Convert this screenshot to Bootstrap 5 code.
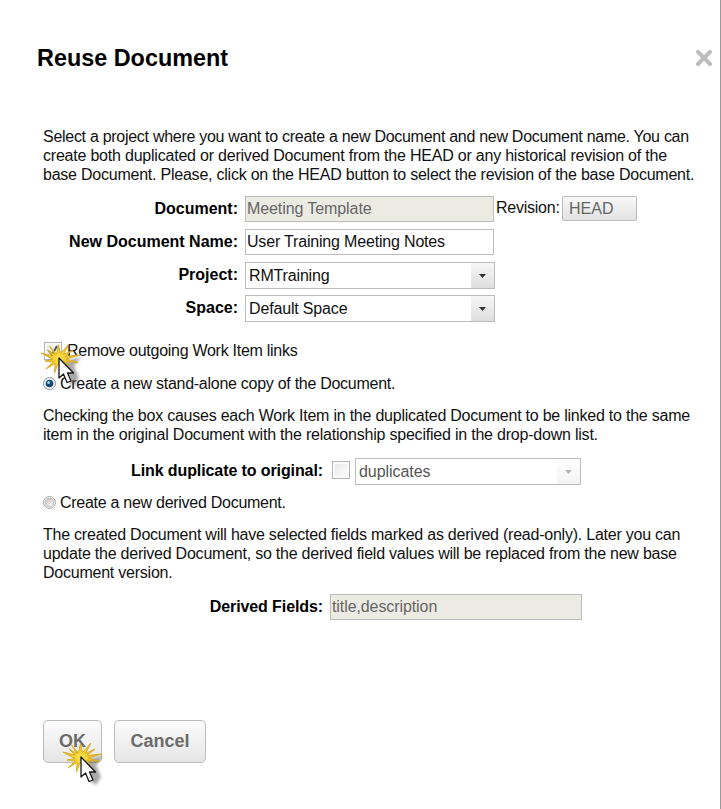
<!DOCTYPE html>
<html lang="en">
<head>
<meta charset="utf-8">
<title>Reuse Document</title>
<link href="https://cdn.jsdelivr.net/npm/bootstrap@5.3.0/dist/css/bootstrap.min.css" rel="stylesheet">
<style>
body{font:16px/19px "Liberation Sans",Arial,sans-serif;color:#111;background:#fff;overflow:hidden}
.dialog-pane{width:721px;height:809px;border-right:1px solid #999;padding:0 0 0 43px}
.dialog-head{height:127px;padding:43px 7px 0 0;margin-left:-6px}
.dialog-title{font-size:23.4px;line-height:30px;color:#000}
.dialog-close{margin-top:6px}
.dialog-form{padding-top:12px}
.copy{white-space:nowrap;margin:0;letter-spacing:-.23px}
.after-choice{margin-top:13px}
.t0{letter-spacing:-.285px}
.t1{letter-spacing:-.213px}
.field-row{height:33px}
.field-label{width:195px;line-height:25px;font-weight:bold;color:#000;text-align:right;white-space:nowrap;margin-right:7px}
.wide-label .field-label{width:280px;letter-spacing:-.1px}
.link-row{margin-top:14px;height:35px}
.derived-row{margin-top:12px;height:126px}
.text-field{width:249px;height:26px;padding:0 1px;border:1px solid #bcbcbc;border-radius:0;color:#111;font-size:16px;line-height:24px;outline:0;letter-spacing:-.18px}
.text-field.locked{background:#ebebe4;color:#666;letter-spacing:-.09px}
.derived-row .text-field{width:252px}
.combo{width:250px;height:27px;border:1px solid #bcbcbc;padding-left:3px;line-height:25px;letter-spacing:-.16px}
.combo-arrow{width:23px;background:linear-gradient(#f7f7f7,#dedede)}
.combo.off{width:226px;color:#555;letter-spacing:-.05px}
.combo.off .combo-arrow{background:linear-gradient(#fff,#f4f4f4)}
.rev-label{width:66px;padding:2px 0 0 2px;letter-spacing:-.24px}
.rev-btn{margin-left:2px;width:75px;height:25px;border:1px solid #bcbcbc;border-radius:2px;background:linear-gradient(#f8f8f8,#e2e2e2);color:#666;font-size:16px;line-height:23px;padding:0 0 0 6px;text-align:left}
.tick-box{width:18px;height:18px;border:1px solid #b5b5b5;background:linear-gradient(135deg,#e6e6e6,#fff);box-shadow:inset 0 0 0 2px #fafafa}
.link-row .tick-box{margin:3px 5px 0 2px}
.choice{height:19px;gap:4px;white-space:nowrap;letter-spacing:-.275px}
.links-choice{margin:13px 0 14px 1px;gap:5px}
.actions{gap:12px}
.big-btn{width:92px;height:43px;border:1px solid #bcbcbc;border-radius:5px;background:linear-gradient(#fbfbfb,#e6e6e6);color:#6b6b6b;font-weight:bold;font-size:18px;line-height:38px;padding:0 0 2px}
.big-btn.ok{width:59px}
.pointer{position:absolute;z-index:3;overflow:visible;pointer-events:none}
.on-check{left:15px;top:17px}
.on-ok{left:38px;top:37px}
</style>
</head>
<body>
<svg width="0" height="0" class="position-absolute">
<defs>
<filter id="soft" x="-50%" y="-50%" width="200%" height="200%"><feGaussianBlur stdDeviation="1.8"/></filter>
<radialGradient id="gold" gradientUnits="userSpaceOnUse" cx="0" cy="0" r="18"><stop offset="0" stop-color="#fbe24f"/><stop offset=".4" stop-color="#f3cd2e"/><stop offset="1" stop-color="#e3b21c"/></radialGradient>
<radialGradient id="off" cx=".6" cy=".65"><stop offset="0" stop-color="#fafafa"/><stop offset="1" stop-color="#cdcdcd"/></radialGradient>
<g id="click">
<path d="M6 3L22 -1 15 8 20 20 15 28 9 24 5 10z" fill="#555" opacity=".5" filter="url(#soft)"/>
<path d="M-9.500-12L-2.500-4-.5-13.500 1.500-4.500 10-14 4.500-3.500 14-8 6-1.500 21-3 7 1 19 4.500 6 3.500 10 8 3 4-1 6-4.500 15-4 5.500-13 11-6 4-14 3-6 1.500-18-5-6-2-12-8-4-3.500z" fill="url(#gold)" stroke="#d8a91c" stroke-width=".9" stroke-linejoin="round"/>
<path d="M0 0V20L4.500 16 8 24.500 12 23 8.500 15H14.500z" fill="#fff" stroke="#171717" stroke-width="1.300" stroke-linejoin="round"/>
</g>
</defs>
</svg>
<main class="dialog-pane">
<header class="dialog-head d-flex justify-content-between align-items-start">
<h1 class="dialog-title fw-bold m-0">Reuse Document</h1>
<svg width="18" height="18" viewBox="0 0 18 18" class="dialog-close"><path d="M3 3L15 15M15 3L3 15" stroke="#bdbdbd" stroke-width="4.200" stroke-linecap="round"/></svg>
</header>
<p class="copy"><span class="t0">Select a project where you want to create a new Document and new Document name. You can</span><br><span class="t1">create both duplicated or derived Document from the HEAD or any historical revision of the</span><br>base Document. Please, click on the HEAD button to select the revision of the base Document.</p>
<form class="dialog-form">
<div class="field-row d-flex align-items-start"><label class="field-label">Document:</label><input class="text-field locked" value="Meeting Template" readonly><span class="rev-label">Revision:</span><button type="button" class="rev-btn">HEAD</button></div>
<div class="field-row d-flex align-items-start"><label class="field-label">New Document Name:</label><input class="text-field" value="User Training Meeting Notes"></div>
<div class="field-row d-flex align-items-start"><label class="field-label">Project:</label><div class="combo d-flex justify-content-between"><span>RMTraining</span><span class="combo-arrow d-flex align-items-center justify-content-center"><svg width="7" height="4"><path d="M0 0H7L3.500 4z" fill="#333"/></svg></span></div></div>
<div class="field-row d-flex align-items-start"><label class="field-label">Space:</label><div class="combo d-flex justify-content-between"><span>Default Space</span><span class="combo-arrow d-flex align-items-center justify-content-center"><svg width="7" height="4"><path d="M0 0H7L3.500 4z" fill="#333"/></svg></span></div></div>
<div class="choice links-choice d-flex align-items-center position-relative"><span class="tick-box d-flex justify-content-center align-items-center"><svg width="12" height="12"><path d="M2 6L5 10 10 1" fill="none" stroke="#4a4f7c" stroke-width="2"/></svg></span><span>Remove outgoing Work Item links</span>
<svg class="pointer on-check" width="1" height="1"><use href="#click"/></svg></div>
<div class="choice d-flex align-items-center"><svg width="13" height="13"><circle cx="6.500" cy="6.500" r="6" fill="#f4f4f4" stroke="#8d979f"/><circle cx="6.500" cy="6.500" r="3.800" fill="#17486e"/><circle cx="5.600" cy="5.400" r="1.500" fill="#8fd0ee"/></svg><span>Create a new stand-alone copy of the Document.</span></div>
<p class="copy after-choice">Checking the box causes each Work Item in the duplicated Document to be linked to the same<br><span class="t1">item in the original Document with the relationship specified in the drop-down list.</span></p>
<div class="wide-label link-row d-flex align-items-start"><label class="field-label">Link duplicate to original:</label><span class="tick-box"></span><div class="combo off d-flex justify-content-between"><span>duplicates</span><span class="combo-arrow d-flex align-items-center justify-content-center"><svg width="7" height="4"><path d="M0 0H7L3.500 4z" fill="#b5b5b5"/></svg></span></div></div>
<div class="choice d-flex align-items-center"><svg width="13" height="13"><circle cx="6.500" cy="6.500" r="6" fill="#f4f4f4" stroke="#aaa"/><circle cx="6.500" cy="6.500" r="4.400" fill="url(#off)" stroke="#bbb" stroke-width=".7"/></svg><span>Create a new derived Document.</span></div>
<p class="copy after-choice">The created Document will have selected fields marked as derived (read-only). Later you can<br>update the derived Document, so the derived field values will be replaced from the new base<br>Document version.</p>
<div class="wide-label derived-row d-flex align-items-start"><label class="field-label">Derived Fields:</label><input class="text-field locked" value="title,description" readonly></div>
<div class="actions d-flex position-relative"><button type="button" class="big-btn ok">OK</button><button type="button" class="big-btn">Cancel</button>
<svg class="pointer on-ok" width="1" height="1"><use href="#click"/></svg></div>
</form>
</main>
<script src="https://cdn.jsdelivr.net/npm/bootstrap@5.3.0/dist/js/bootstrap.bundle.min.js"></script>
</body>
</html>
